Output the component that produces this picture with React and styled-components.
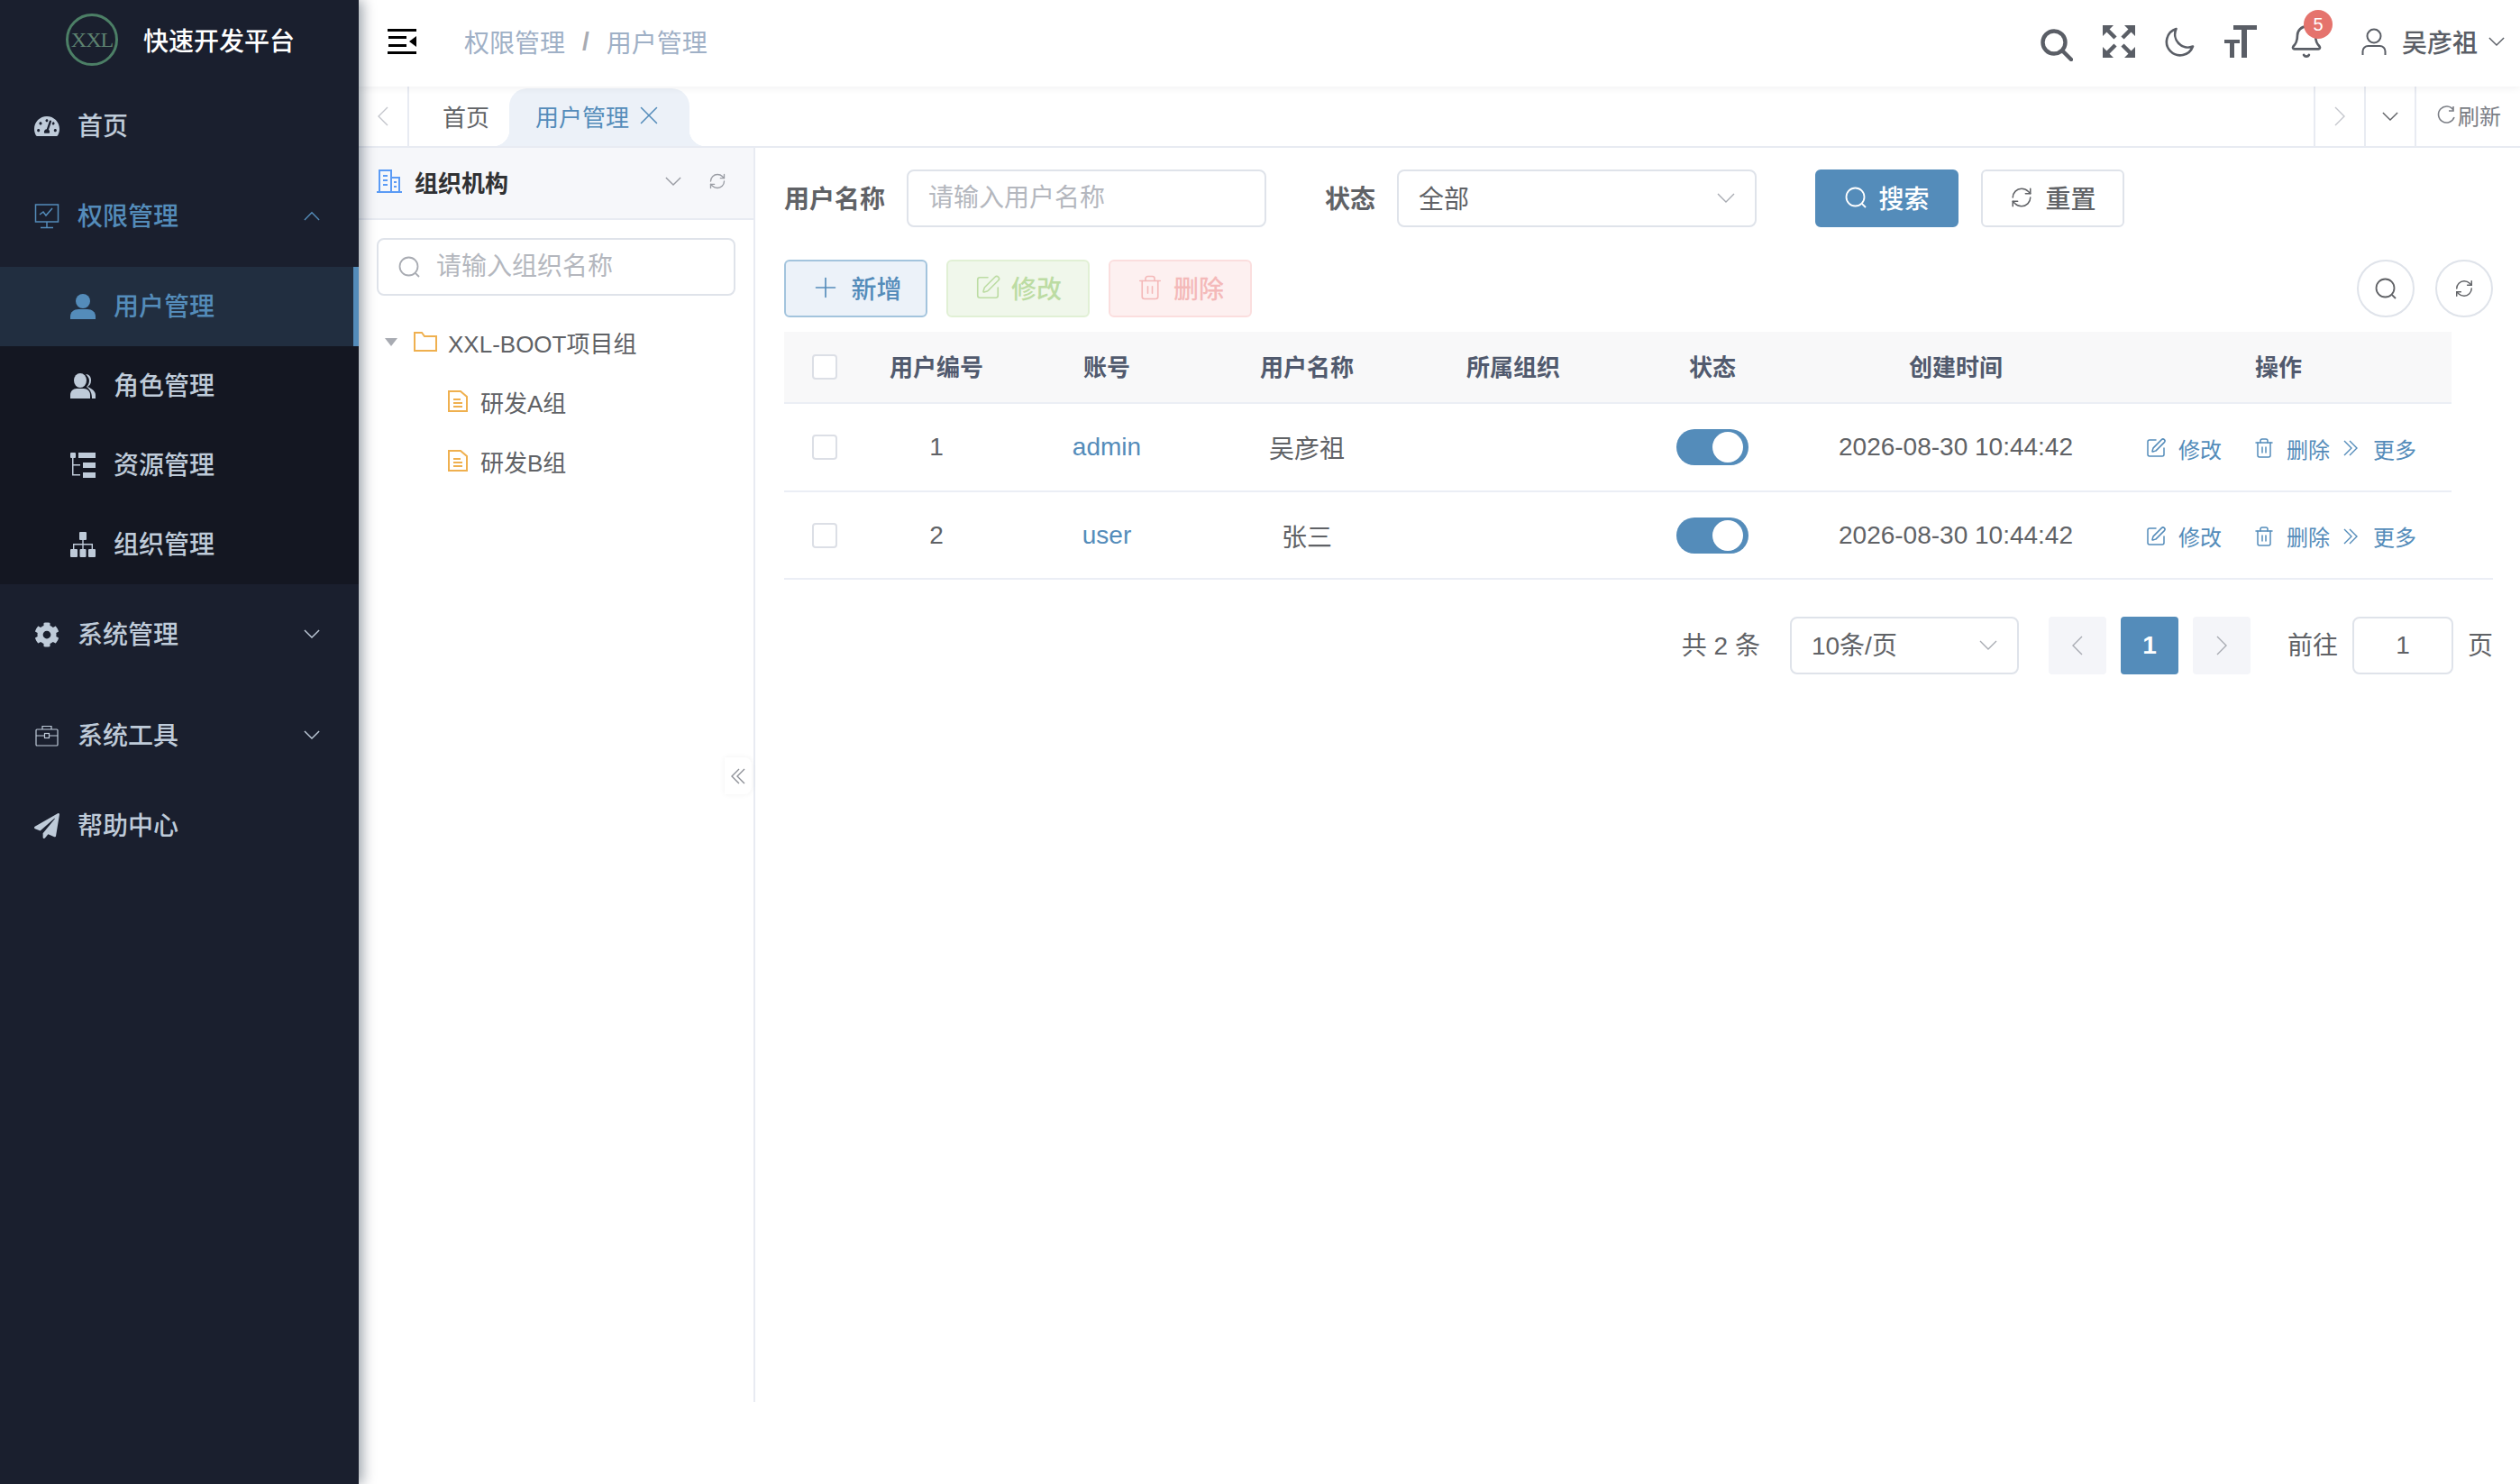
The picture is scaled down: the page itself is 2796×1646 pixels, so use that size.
import React from 'react'
import styled, { createGlobalStyle } from 'styled-components'
import { FaTachometerAlt, FaCog, FaPaperPlane } from 'react-icons/fa'
import { Plus, SquarePen, Trash2, RefreshCw, Bell, X } from 'lucide-react'

const PRIMARY = '#548cba'

const GlobalStyle = createGlobalStyle`
  html, body { margin: 0; padding: 0; background: #fff; }
  body {
    font-family: "Liberation Sans", "Noto Sans CJK SC", sans-serif;
    color: #606266;
  }
  * { box-sizing: border-box; }
`

const Shell = styled.div`
  display: flex;
  width: 2796px;
  height: 1646px;
  overflow: hidden;
`

/* ---------- sidebar ---------- */

const Sidebar = styled.aside`
  width: 398px;
  flex-shrink: 0;
  background: #1a1f2e;
  box-shadow: 4px 0 14px rgba(0, 21, 41, 0.4);
  position: relative;
  z-index: 3;
`

const Brand = styled.div`
  height: 84px;
  padding: 4px 0 0 73px;
  display: flex;
  align-items: center;
  gap: 28px;
`

const LogoMark = styled.div`
  width: 58px;
  height: 58px;
  border-radius: 50%;
  border: 3px solid #4c7f66;
  display: flex;
  align-items: center;
  justify-content: center;
  font-family: "Liberation Serif", serif;
  font-size: 24px;
  color: #5d8270;
  letter-spacing: -1px;
`

const BrandName = styled.div`
  font-size: 28px;
  font-weight: 500;
  color: #fff;
`

const MenuItem = styled.div`
  height: ${p => p.$h || 112}px;
  margin-bottom: ${p => p.$mb || 0}px;
  padding-left: 38px;
  display: flex;
  align-items: center;
  gap: 20px;
  font-size: 28px;
  font-weight: 500;
  color: ${p => (p.$active ? PRIMARY : '#bfcbd9')};
  position: relative;
`

const SubMenu = styled.div`
  background: #141722;
`

const SubItem = styled.div`
  height: 88px;
  padding-left: 78px;
  display: flex;
  align-items: center;
  gap: 20px;
  font-size: 28px;
  font-weight: 500;
  color: ${p => (p.$active ? PRIMARY : '#bfcbd9')};
  background: ${p => (p.$active ? '#212e40' : 'transparent')};
  border-right: ${p => (p.$active ? `6px solid ${PRIMARY}` : '0')};
`

/* CJK glyphs sit a little low in the line box, lift them */
const Label = styled.span`
  margin-bottom: ${p => p.$lift || 4}px;
`

const IconBox = styled.span`
  width: 28px;
  height: 28px;
  flex-shrink: 0;
  display: inline-flex;
  align-items: center;
  justify-content: center;
`

const MenuArrow = styled.span`
  position: absolute;
  left: 337px;
  top: 50%;
  margin-top: -6px;
  display: flex;
`

const Chevron = ({ up, size = 18, color = 'currentColor', width = 1.4 }) => (
  <svg width={size} height={size * 0.6} viewBox="0 0 20 12" fill="none" stroke={color} strokeWidth={width * 20 / size}>
    <path d={up ? 'M1 11 10 2l9 9' : 'M1 1l9 9 9-9'} />
  </svg>
)

const MonitorIcon = () => (
  <svg width="28" height="28" viewBox="0 0 28 28" fill="none" stroke="currentColor" strokeWidth="1.5">
    <rect x="1.5" y="1" width="25" height="19" />
    <path d="M6 12l4-3 3 4 7-8M14 20v6M7 26.5h14" />
  </svg>
)

const UserSolid = () => (
  <svg width="28" height="28" viewBox="0 0 28 28" fill="currentColor">
    <ellipse cx="14" cy="8" rx="8" ry="8" />
    <path d="M0 28v-3c0-5 4-8 9-8h10c5 0 9 3 9 8v3z" />
  </svg>
)

const UsersSolid = () => (
  <svg width="28" height="28" viewBox="0 0 28 28" fill="currentColor">
    <ellipse cx="11" cy="8" rx="7" ry="8" />
    <path d="M0 28v-4c0-4 3-7 7-7h8c4 0 7 3 7 7v4z" />
    <path d="M17 1c4 0 6 3 6 7s-2 6-4 7c5 2 9 5 9 9v4h-4c0-5-1-9-6-13 2-2 3-4 3-7 0-3-2-5-4-7z" />
  </svg>
)

const SitemapIcon = () => (
  <svg width="28" height="28" viewBox="0 0 28 28" fill="currentColor">
    <rect x="10" y="0" width="8" height="9" rx="1" />
    <rect x="0" y="19" width="8" height="9" rx="1" />
    <rect x="10.5" y="19" width="7" height="9" rx="1" />
    <rect x="20" y="19" width="8" height="9" rx="1" />
    <path d="M13.3 9h1.4v4H25v6h-1.4v-4.6h-8.9V19h-1.4v-4.6H4.4V19H3v-6h10.3z" />
  </svg>
)

const TreeIcon = () => (
  <svg width="28" height="28" viewBox="0 0 28 28" fill="currentColor">
    <rect x="0" y="0" width="6" height="6" rx="1" />
    <rect x="9" y="0" width="19" height="6" />
    <rect x="14" y="11" width="14" height="6" />
    <rect x="14" y="22" width="14" height="6" />
    <path d="M2 6h1.5v7H11v1.5H3.5V24H11v1.5H2z" />
  </svg>
)

const CaseIcon = () => (
  <svg width="26" height="24" viewBox="0 0 26 24" fill="none" stroke="currentColor" strokeWidth="1.2">
    <rect x="1" y="5" width="24" height="18" rx="1" />
    <path d="M8 5V1.5h10V5M1 12h9.5M15.5 12H25" />
    <rect x="10.5" y="9.5" width="5" height="5" />
  </svg>
)

/* ---------- header ---------- */

const Column = styled.div`
  flex: 1;
  min-width: 0;
  display: flex;
  flex-direction: column;
`

const Header = styled.header`
  height: 96px;
  flex-shrink: 0;
  padding: 0 17px 4px 32px;
  display: flex;
  align-items: center;
  background: #fff;
  box-shadow: 0 2px 8px rgba(0, 21, 41, 0.06);
  position: relative;
  z-index: 2;
`

const Crumbs = styled.nav`
  margin-left: 51px;
  display: flex;
  align-items: center;
  font-size: 28px;
  color: #9fb0c6;
`

const CrumbSep = styled.span`
  margin: 0 19px;
  color: #a8abb2;
  font-weight: 700;
`

const Toolbar = styled.div`
  margin-left: auto;
  display: flex;
  align-items: center;
  gap: 33px;
  color: #5a5e66;
`

const SearchNudge = styled.span`
  display: flex;
  margin-top: 8px;
`

const BellWrap = styled.div`
  position: relative;
  margin-left: 2px;
  display: flex;
`

const Badge = styled.span`
  position: absolute;
  left: 17px;
  top: -15px;
  width: 32px;
  height: 32px;
  border-radius: 50%;
  background: #e5736d;
  color: #fff;
  font-size: 20px;
  display: flex;
  align-items: center;
  justify-content: center;
`

const UserBox = styled.div`
  margin-left: 8px;
  display: flex;
  align-items: center;
`

const UserName = styled.span`
  margin: 0 12px 0 17px;
  font-size: 28px;
  font-weight: 500;
`

const MenuFoldIcon = () => (
  <svg width="34" height="28" viewBox="0 0 34 28" fill="#000">
    <rect x="0" y="0" width="32" height="3" />
    <rect x="1" y="8" width="20" height="3" />
    <rect x="1" y="17" width="20" height="3" />
    <rect x="0" y="25" width="32" height="3" />
    <path d="M32 8v12l-8-6z" />
  </svg>
)

const HeadSearch = () => (
  <svg width="36" height="36" viewBox="0 0 36 36" fill="none" stroke="currentColor" strokeWidth="4.4">
    <circle cx="15" cy="15" r="12.5" />
    <path d="M24 24l10 10" strokeLinecap="round" />
  </svg>
)

const FullIcon = () => (
  <svg width="36" height="36" viewBox="0 0 36 36" fill="currentColor" stroke="currentColor">
    <path d="M0 0h12L0 12zM36 0H24l12 12zM0 36h12L0 24zM36 36H24l12-12z" strokeWidth="0" />
    <path d="M5 5l9 9M31 5l-9 9M5 31l9-9M31 31l-9-9" strokeWidth="4.5" fill="none" />
  </svg>
)

const MoonIcon = () => (
  <svg width="33" height="33" viewBox="0 0 33 33" fill="none" stroke="currentColor" strokeWidth="2.6" strokeLinejoin="round">
    <path d="M12.5 2A15 15 0 1 0 31 21.5 14.5 14.5 0 0 1 12.5 2z" />
  </svg>
)

const FontIcon = () => (
  <svg width="36" height="36" viewBox="0 0 36 36" fill="currentColor">
    <rect x="10" y="0" width="26" height="5" />
    <rect x="19" y="0" width="6" height="36" />
    <rect x="0" y="16" width="17" height="4" />
    <rect x="6" y="16" width="5" height="20" />
  </svg>
)

const UserOutline = () => (
  <svg width="28" height="30" viewBox="0 0 28 30" fill="none" stroke="currentColor" strokeWidth="2">
    <circle cx="14" cy="9" r="7.5" />
    <path d="M1.5 30v-4a6 6 0 0 1 6-6h13a6 6 0 0 1 6 6v4" />
  </svg>
)

/* ---------- tabs ---------- */

const TabsBar = styled.div`
  height: 68px;
  flex-shrink: 0;
  display: flex;
  background: #fff;
  border-bottom: 2px solid #e8ebf2;
`

const TabCell = styled.div`
  width: ${p => p.$w}px;
  display: flex;
  align-items: center;
  justify-content: center;
  color: ${p => p.$color || '#8a8d94'};
  border-left: ${p => (p.$left ? '2px solid #e8ebf2' : '0')};
  border-right: ${p => (p.$right ? '2px solid #e8ebf2' : '0')};
`

const Tab = styled.div`
  padding: 0 ${p => p.$pr}px 4px ${p => p.$pl}px;
  align-self: flex-end;
  height: 64px;
  display: flex;
  align-items: center;
  gap: 5px;
  font-size: 26px;
  color: ${p => (p.$active ? PRIMARY : '#606266')};
  background: ${p => (p.$active ? '#ecf1f8' : 'transparent')};
  border-radius: 20px 20px 0 0;
  position: relative;

  ${p => p.$active && `
    &::before, &::after {
      content: '';
      position: absolute;
      bottom: 0;
      width: 18px;
      height: 18px;
    }
    &::before {
      left: -18px;
      background: radial-gradient(circle at 0 0, transparent 18px, #ecf1f8 18.5px);
    }
    &::after {
      right: -18px;
      background: radial-gradient(circle at 100% 0, transparent 18px, #ecf1f8 18.5px);
    }
  `}
`

const TabSpacer = styled.div`
  flex: 1;
`

const RefreshCell = styled.div`
  width: 117px;
  padding: 0 0 4px 23px;
  display: flex;
  align-items: center;
  gap: 3px;
  font-size: 24px;
  color: #7b7e85;
  border-left: 2px solid #e8ebf2;
`

/* ---------- org panel ---------- */

const Body = styled.div`
  flex: 1;
  display: flex;
  min-height: 0;
`

const OrgPanel = styled.section`
  width: 440px;
  height: 1391px;
  flex-shrink: 0;
  border-right: 2px solid #e8ebf2;
  position: relative;
`

const OrgHead = styled.div`
  height: 80px;
  padding: 0 0 4px 20px;
  display: flex;
  align-items: center;
  background: #f6f7fa;
  border-bottom: 2px solid #e8ebf2;
  font-size: 26px;
  font-weight: 700;
  color: #303133;
`

const OrgTitle = styled.span`
  margin-left: 14px;
  flex: 1;
`

const OrgTools = styled.div`
  display: flex;
  align-items: center;
  gap: 30px;
  margin-right: 30px;
  color: #9a9da4;
`

const SearchField = styled.label`
  margin: 20px 0 0 20px;
  width: 398px;
  height: 64px;
  padding-left: 22px;
  display: flex;
  align-items: center;
  gap: 18px;
  border: 2px solid #dfe3ea;
  border-radius: 8px;
  color: #a8abb2;
`

const PlainInput = styled.input`
  border: 0;
  outline: 0;
  padding: 0;
  flex: 1;
  min-width: 0;
  font: inherit;
  font-size: 28px;
  background: transparent;
  color: #606266;

  &::placeholder { color: #b4b7be; opacity: 1; }
`

const Tree = styled.ul`
  list-style: none;
  margin: 18px 0 0;
  padding: 0;
`

const TreeRow = styled.li`
  height: 66px;
  padding-left: ${p => p.$indent}px;
  display: flex;
  align-items: center;
  gap: ${p => p.$gap}px;
  font-size: 26px;
  color: #606266;
`

const Caret = styled.span`
  width: 0;
  height: 0;
  margin-right: 6px;
  border-style: solid;
  border-width: 9px 7px 0;
  border-color: #a8abb2 transparent transparent;
`

const Collapse = styled.div`
  position: absolute;
  right: 2px;
  top: 676px;
  width: 30px;
  height: 41px;
  display: flex;
  align-items: center;
  justify-content: center;
  background: #fff;
  border-radius: 0 8px 8px 0;
  box-shadow: 0 0 6px rgba(0, 0, 0, 0.06);
  color: #8e9198;
`

const DoubleArrow = ({ left }) => (
  <svg width="16" height="18" viewBox="0 0 16 18" fill="none" stroke="currentColor" strokeWidth="1.4">
    <path d={left ? 'M9 1L1 9l8 8M15 1L7 9l8 8' : 'M1 1l8 8-8 8M7 1l8 8-8 8'} />
  </svg>
)

const FolderIcon = () => (
  <svg width="26" height="22" viewBox="0 0 26 22" fill="none" stroke="#efb04f" strokeWidth="2">
    <path d="M1 1h8l3 4h13v16H1z" />
  </svg>
)

const DocIcon = () => (
  <svg width="22" height="24" viewBox="0 0 22 24" fill="none" stroke="#efb04f" strokeWidth="2">
    <path d="M1 1h13l7 6v16H1zM6 10h8M6 14h10M6 18h10" />
  </svg>
)

const BuildingIcon = () => (
  <svg width="28" height="26" viewBox="0 0 28 26" fill="none" stroke="#5b9bf5" strokeWidth="2">
    <path d="M0 25h28M3 25V1h13v24M16 9h9v16M7 7h5M7 12h5M7 17h5M19 14h3M19 19h3" />
  </svg>
)

const SearchGlyph = ({ size = 24 }) => (
  <svg width={size} height={size} viewBox="0 0 24 24" fill="none" stroke="currentColor" strokeWidth="1.8">
    <circle cx="11.5" cy="11.5" r="10" />
    <path d="M18.8 18.8L23 23" />
  </svg>
)

/* ---------- main ---------- */

const Main = styled.main`
  flex: 1;
  min-width: 0;
  padding: 24px 30px 0 32px;
`

const FormRow = styled.div`
  display: flex;
  align-items: center;
  height: 64px;
`

const FieldLabel = styled.span`
  margin: 0 ${p => p.$mr}px 3px ${p => p.$ml || 0}px;
  font-size: 28px;
  font-weight: 700;
  color: #606266;
  white-space: nowrap;
`

const Field = styled.div`
  width: ${p => p.$w}px;
  height: 64px;
  padding: 0 ${p => p.$pad ?? 22}px;
  display: flex;
  align-items: center;
  justify-content: ${p => (p.$center ? 'center' : 'space-between')};
  border: 2px solid #dfe3ea;
  border-radius: 8px;
  font-size: 28px;
  color: #606266;
  background: #fff;
`

const FieldChevron = styled.span`
  display: flex;
  color: #a8abb2;
`

const Button = styled.button`
  width: 159px;
  height: 64px;
  margin-left: ${p => p.$ml || 0}px;
  padding: 0 0 3px;
  display: inline-flex;
  align-items: center;
  justify-content: center;
  gap: ${p => p.$gap || 14}px;
  font: inherit;
  font-size: 28px;
  font-weight: 500;
  border-radius: 6px;
  border: 2px solid ${p => p.$border};
  background: ${p => p.$bg};
  color: ${p => p.$color};
`

const ActionRow = styled.div`
  margin-top: 36px;
  display: flex;
  align-items: center;
  width: 1896px;
`

const RoundGroup = styled.div`
  margin-left: auto;
  display: flex;
  gap: 23px;
`

const RoundButton = styled.div`
  width: 64px;
  height: 64px;
  border: 2px solid #dfe3ea;
  border-radius: 50%;
  display: flex;
  align-items: center;
  justify-content: center;
  color: #606266;
`

const Table = styled.div`
  margin-top: 16px;
  width: 1896px;
  border-bottom: 2px solid #ebeef5;
`

const GridRow = styled.div`
  width: 1850px;
  height: ${p => p.$h}px;
  display: grid;
  grid-template-columns: 90px 158px 220px 224px 234px 208px 332px 384px;
  align-items: center;
  justify-items: center;
  font-size: ${p => (p.$head ? 26 : 28)}px;
  font-weight: ${p => (p.$head ? 700 : 400)};
  color: ${p => (p.$head ? '#515a6e' : '#606266')};
  background: ${p => (p.$head ? '#f8f8f9' : '#fff')};
  border-bottom: ${p => (p.$last ? '0' : '2px solid #ebeef5')};
`

const HeadCell = styled.span`
  margin-bottom: 3px;
`

const Check = styled.span`
  width: 28px;
  height: 28px;
  border: 2px solid #dcdfe6;
  border-radius: 4px;
  background: #fff;
`

const Account = styled.span`
  color: ${PRIMARY};
`

const Switch = styled.span`
  width: 80px;
  height: 40px;
  padding: 0 6px;
  border-radius: 20px;
  background: ${PRIMARY};
  display: flex;
  align-items: center;
  justify-content: flex-end;

  &::after {
    content: '';
    width: 34px;
    height: 34px;
    border-radius: 50%;
    background: #fff;
  }
`

const Ops = styled.div`
  width: 100%;
  padding: 2px 0 0 44px;
  display: flex;
  align-items: center;
  font-size: 24px;
  color: ${PRIMARY};
`

const Op = styled.span`
  display: inline-flex;
  align-items: center;
  gap: ${p => p.$gap || 13}px;
  margin-right: ${p => p.$mr}px;
`

const Pager = styled.div`
  margin-top: 41px;
  width: 1896px;
  height: 64px;
  display: flex;
  align-items: center;
  justify-content: flex-end;
  font-size: 28px;
  color: #606266;
`

const PagerText = styled.span`
  margin: 0 ${p => p.$mr}px 4px ${p => p.$ml}px;
  white-space: pre;
`

const PageButton = styled.div`
  width: 64px;
  height: 64px;
  margin: 0 ${p => p.$mr}px 0 ${p => p.$ml || 0}px;
  display: flex;
  align-items: center;
  justify-content: center;
  border-radius: 4px;
  font-weight: 700;
  background: ${p => (p.$on ? PRIMARY : '#f4f5f9')};
  color: ${p => (p.$on ? '#fff' : '#a8abb2')};
`

const Arrow = ({ dir, h = 20 }) => (
  <svg width={h / 2 + 2} height={h + 2} viewBox="0 0 12 22" fill="none" stroke="currentColor" strokeWidth="1.4">
    <path d={dir === 'left' ? 'M11 1L1 11l10 10' : 'M1 1l10 10L1 21'} />
  </svg>
)

const subMenus = [
  { label: '用户管理', icon: <UserSolid />, active: true },
  { label: '角色管理', icon: <UsersSolid /> },
  { label: '资源管理', icon: <TreeIcon /> },
  { label: '组织管理', icon: <SitemapIcon /> },
]

const users = [
  { id: 1, account: 'admin', name: '吴彦祖', h: 98 },
  { id: 2, account: 'user', name: '张三', h: 95, last: true },
]

const App = () => {
  return (
    <Shell>
      <GlobalStyle />
      <Sidebar>
        <Brand>
          <LogoMark>XXL</LogoMark>
          <BrandName>快速开发平台</BrandName>
        </Brand>
        <MenuItem>
          <IconBox><FaTachometerAlt size={28} /></IconBox><Label>首页</Label>
        </MenuItem>
        <MenuItem $h={88} $mb={12} $active>
          <IconBox><MonitorIcon /></IconBox><Label>权限管理</Label>
          <MenuArrow><Chevron up /></MenuArrow>
        </MenuItem>
        <SubMenu>
          {subMenus.map(item => (
            <SubItem key={item.label} $active={item.active}>
              <IconBox>{item.icon}</IconBox><Label>{item.label}</Label>
            </SubItem>
          ))}
        </SubMenu>
        <MenuItem>
          <IconBox><FaCog size={28} /></IconBox><Label>系统管理</Label>
          <MenuArrow><Chevron /></MenuArrow>
        </MenuItem>
        <MenuItem>
          <IconBox><CaseIcon /></IconBox><Label>系统工具</Label>
          <MenuArrow><Chevron /></MenuArrow>
        </MenuItem>
        <MenuItem $h={88}>
          <IconBox><FaPaperPlane size={28} /></IconBox><Label>帮助中心</Label>
        </MenuItem>
      </Sidebar>

      <Column>
        <Header>
          <MenuFoldIcon />
          <Crumbs>
            权限管理<CrumbSep>/</CrumbSep>用户管理
          </Crumbs>
          <Toolbar>
            <SearchNudge><HeadSearch /></SearchNudge>
            <FullIcon />
            <MoonIcon />
            <FontIcon />
            <BellWrap>
              <Bell size={40} strokeWidth={1.6} />
              <Badge>5</Badge>
            </BellWrap>
            <UserBox>
              <UserOutline />
              <UserName>吴彦祖</UserName>
              <Chevron size={18} />
            </UserBox>
          </Toolbar>
        </Header>

        <TabsBar>
          <TabCell $w={56} $right $color="#c4c6cc"><Arrow dir="left" /></TabCell>
          <Tab $pl={37} $pr={22}>首页</Tab>
          <Tab $active $pl={29} $pr={28}>
            用户管理<X size={34} strokeWidth={1.1} />
          </Tab>
          <TabSpacer />
          <TabCell $w={56} $left $color="#c4c6cc"><Arrow dir="right" /></TabCell>
          <TabCell $w={56} $left $color="#606266"><Chevron size={18} /></TabCell>
          <RefreshCell>
            <svg width="20" height="22" viewBox="0 0 20 22" fill="none" stroke="currentColor" strokeWidth="1.6">
              <path d="M18 6a9 9 0 1 0 1 8M18 2v5h-5" />
            </svg>
            刷新
          </RefreshCell>
        </TabsBar>

        <Body>
          <OrgPanel>
            <OrgHead>
              <BuildingIcon />
              <OrgTitle>组织机构</OrgTitle>
              <OrgTools>
                <Chevron size={18} />
                <RefreshCw size={20} strokeWidth={1.6} />
              </OrgTools>
            </OrgHead>
            <SearchField>
              <SearchGlyph />
              <PlainInput placeholder="请输入组织名称" />
            </SearchField>
            <Tree>
              <TreeRow $indent={29} $gap={12}>
                <Caret />
                <FolderIcon />
                <span>XXL-BOOT项目组</span>
              </TreeRow>
              <TreeRow $indent={99} $gap={14}>
                <DocIcon />
                <span>研发A组</span>
              </TreeRow>
              <TreeRow $indent={99} $gap={14}>
                <DocIcon />
                <span>研发B组</span>
              </TreeRow>
            </Tree>
            <Collapse><DoubleArrow left /></Collapse>
          </OrgPanel>

          <Main>
            <FormRow>
              <FieldLabel $mr={24}>用户名称</FieldLabel>
              <Field $w={399}><PlainInput placeholder="请输入用户名称" /></Field>
              <FieldLabel $ml={65} $mr={24}>状态</FieldLabel>
              <Field $w={399}>
                <Label $lift={3}>全部</Label>
                <FieldChevron><Chevron size={20} /></FieldChevron>
              </Field>
              <Button $ml={65} $bg={PRIMARY} $border={PRIMARY} $color="#fff">
                <SearchGlyph />搜索
              </Button>
              <Button $ml={25} $bg="#fff" $border="#dfe3ea" $color="#606266">
                <RefreshCw size={26} strokeWidth={1.4} />重置
              </Button>
            </FormRow>

            <ActionRow>
              <Button $gap={10} $bg="#ecf2f9" $border="#a3c4dd" $color={PRIMARY}>
                <Plus size={36} strokeWidth={1.1} />新增
              </Button>
              <Button $gap={11} $ml={21} $bg="#f0f7eb" $border="#e1f0d5" $color="#bcdca3">
                <SquarePen size={30} strokeWidth={1.3} />修改
              </Button>
              <Button $gap={11} $ml={21} $bg="#fdf0f0" $border="#fbdede" $color="#f4b9b9">
                <Trash2 size={30} strokeWidth={1.3} />删除
              </Button>
              <RoundGroup>
                <RoundButton><SearchGlyph /></RoundButton>
                <RoundButton><RefreshCw size={22} strokeWidth={1.6} /></RoundButton>
              </RoundGroup>
            </ActionRow>

            <Table>
              <GridRow $head $h={80}>
                <Check />
                <HeadCell>用户编号</HeadCell>
                <HeadCell>账号</HeadCell>
                <HeadCell>用户名称</HeadCell>
                <HeadCell>所属组织</HeadCell>
                <HeadCell>状态</HeadCell>
                <HeadCell>创建时间</HeadCell>
                <HeadCell>操作</HeadCell>
              </GridRow>
              {users.map(user => (
                <GridRow key={user.id} $h={user.h} $last={user.last}>
                  <Check />
                  <span>{user.id}</span>
                  <Account>{user.account}</Account>
                  <span>{user.name}</span>
                  <span />
                  <Switch />
                  <span>2026-08-30 10:44:42</span>
                  <Ops>
                    <Op $mr={35}><SquarePen size={24} strokeWidth={1.5} />修改</Op>
                    <Op $mr={15}><Trash2 size={24} strokeWidth={1.5} />删除</Op>
                    <Op $mr={0} $gap={17}><DoubleArrow />更多</Op>
                  </Ops>
                </GridRow>
              ))}
            </Table>

            <Pager>
              <PagerText $ml={0} $mr={33}>共 2 条</PagerText>
              <Field $w={254}>
                <Label $lift={4}>10条/页</Label>
                <FieldChevron><Chevron size={20} /></FieldChevron>
              </Field>
              <PageButton $ml={33} $mr={16}><Arrow dir="left" /></PageButton>
              <PageButton $on $mr={16}>1</PageButton>
              <PageButton $mr={41}><Arrow dir="right" /></PageButton>
              <PagerText $ml={0} $mr={16}>前往</PagerText>
              <Field $w={112} $pad={0} $center>1</Field>
              <PagerText $ml={16} $mr={0}>页</PagerText>
            </Pager>
          </Main>
        </Body>
      </Column>
    </Shell>
  )
}

export default App
